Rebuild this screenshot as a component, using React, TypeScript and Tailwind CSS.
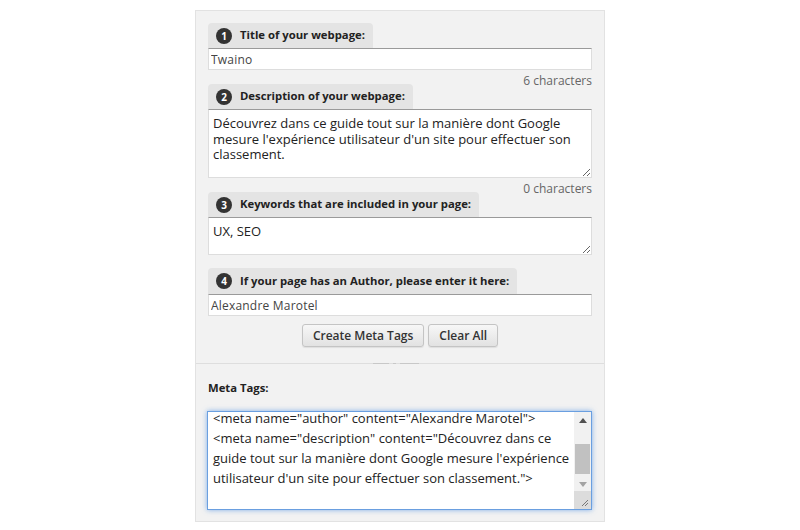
import React from "react";

function StepTab({ n, label }: { n: number; label: string }) {
  return (
    <div className="flex h-[25px] w-fit items-center gap-[8px] rounded-t-[4px] bg-[#e4e4e4] pl-[8px] pr-[8px]">
      <span className="flex h-[16px] w-[16px] items-center justify-center rounded-full bg-[#333] text-[10px] font-bold leading-none text-white">
        {n}
      </span>
      <span className="text-[11.3px] font-bold text-[#222]">{label}</span>
    </div>
  );
}

function Counter({ value }: { value: number }) {
  return (
    <div className="mt-[6px] h-[8px] text-right text-[12px] leading-[10px] text-[#666]">
      {value} characters
    </div>
  );
}

const inputCls =
  "block h-[22px] w-full border border-[#ddd] border-t-[#9a9a9a] bg-white px-[2px] text-[12px] tracking-[0.2px] text-[#444] outline-none";

const areaCls =
  "block w-full border border-[#ddd] border-t-[#9a9a9a] bg-white px-[4px] pt-[6px] pb-[4px] text-[13px] leading-[15.5px] text-[#222] outline-none";

function Button({ children }: { children: React.ReactNode }) {
  return (
    <button className="h-[23px] rounded-[3px] border border-[#c4c4c4] bg-gradient-to-b from-[#f7f7f7] to-[#e2e2e2] px-[10px] text-[12px] font-semibold text-[#333] shadow-[0_1px_1px_rgba(0,0,0,0.08)]">
      {children}
    </button>
  );
}

export default function App() {
  return (
    <div className="min-h-[530px] bg-white pt-[10px] font-['Open_Sans',sans-serif]">
      <div className="mx-auto w-[410px] border border-[#e2e2e2] bg-[#f2f2f2] px-[12px] pb-[11px] pt-[12px]">
        <StepTab n={1} label="Title of your webpage:" />
        <input className={inputCls} defaultValue="Twaino" />
        <Counter value={6} />

        <StepTab n={2} label="Description of your webpage:" />
        <textarea
          className={areaCls + " h-[69px]"}
          defaultValue="Découvrez dans ce guide tout sur la manière dont Google mesure l'expérience utilisateur d'un site pour effectuer son classement."
        />
        <Counter value={0} />

        <StepTab n={3} label="Keywords that are included in your page:" />
        <textarea className={areaCls + " h-[38px]"} defaultValue="UX, SEO" />

        <div className="mt-[13px]">
          <div className="h-[26px] [&>div]:h-[26px]">
            <StepTab n={4} label="If your page has an Author, please enter it here:" />
          </div>
          <input className={inputCls} defaultValue="Alexandre Marotel" />
        </div>

        <div className="mt-[8px] flex justify-center gap-[4px]">
          <Button>Create Meta Tags</Button>
          <Button>Clear All</Button>
        </div>

        <div className="relative -mx-[12px] mt-[16px] h-px bg-[#dedede]">
          <div className="absolute left-[177px] top-0 flex h-[1px] gap-[4px]">
            <span className="w-[16px] bg-[#c8c8c8]" />
            <span className="w-[3px] bg-[#c8c8c8]" />
            <span className="w-[19px] bg-[#c8c8c8]" />
          </div>
        </div>

        <div className="mt-[16px] text-[11.3px] font-bold text-[#222]">Meta Tags:</div>

        <div className="-ml-[1px] mt-[14px] flex h-[99px] overflow-hidden border border-[#6a9fe0] bg-white shadow-[0_0_5px_rgba(90,150,230,0.75)]">
          <div className="flex-1 overflow-hidden pl-[5px] text-[13px] leading-[20px] text-[#222]">
            <div className="-mt-[4px]">
              &lt;meta name="author" content="Alexandre Marotel"&gt;
              <br />
              &lt;meta name="description" content="Découvrez dans ce guide tout sur la manière dont Google mesure l'expérience utilisateur d'un site pour effectuer son classement."&gt;
            </div>
          </div>
          <div className="flex w-[17px] flex-col bg-[#f1f1f1]">
            <div className="flex h-[17px] items-center justify-center">
              <svg width="8" height="5" viewBox="0 0 8 5">
                <path d="M0 5 L4 0 L8 5 Z" fill="#505050" />
              </svg>
            </div>
            <div className="mx-[1px] mt-[15px] h-[30px] bg-[#c1c1c1]" />
            <div className="mt-[5px] flex h-[12px] items-center justify-center">
              <svg width="8" height="5" viewBox="0 0 8 5">
                <path d="M0 0 L4 5 L8 0 Z" fill="#a3a3a3" />
              </svg>
            </div>
            <div className="mt-auto flex h-[18px] items-end justify-end bg-[#dcdcdc] p-[2px]">
              <svg width="9" height="9" viewBox="0 0 9 9">
                <path d="M8 2 L2 8 M8 5 L5 8" stroke="#777" strokeWidth="1" />
              </svg>
            </div>
          </div>
        </div>
      </div>
    </div>
  );
}
